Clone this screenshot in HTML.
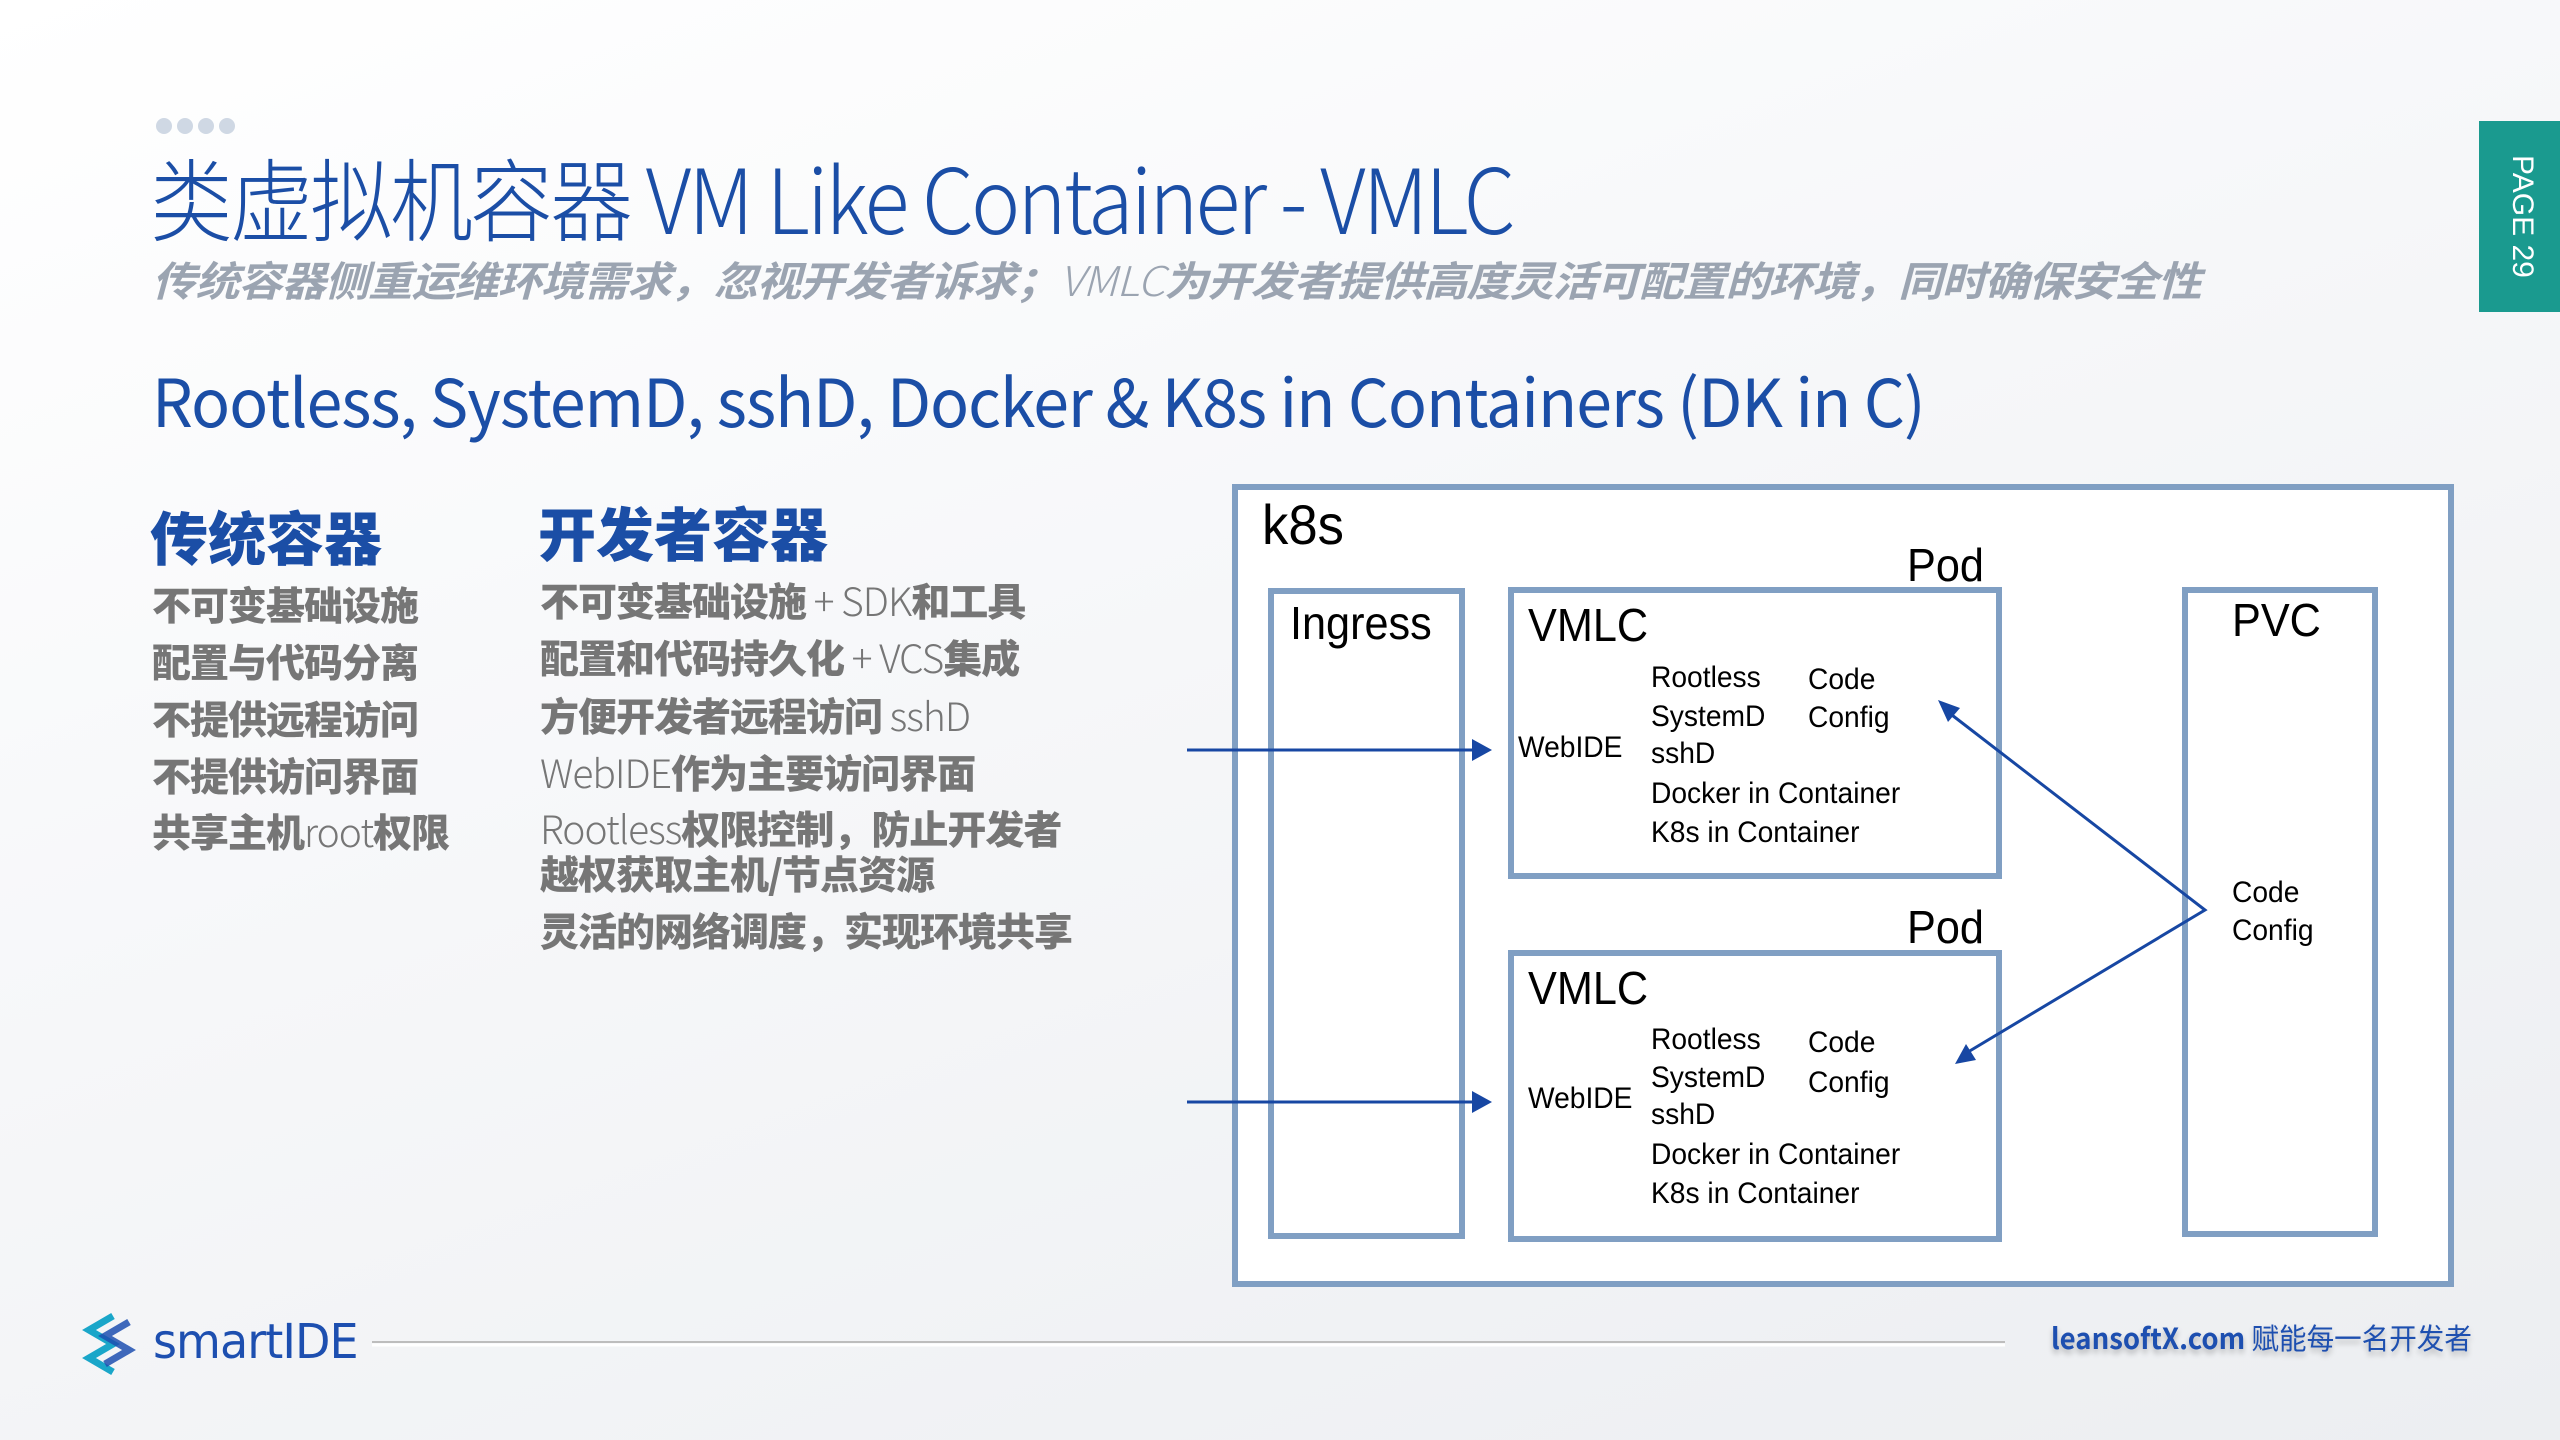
<!DOCTYPE html>
<html><head><meta charset="utf-8"><style>
*{margin:0;padding:0;box-sizing:border-box}
body{width:2560px;height:1440px;overflow:hidden;position:relative;background:linear-gradient(160deg,#ffffff 0%,#f6f7f9 45%,#eceef1 100%);font-family:"Liberation Sans","Noto Sans CJK SC",sans-serif}
.a{position:absolute;white-space:nowrap;line-height:1;transform-origin:0 0}
.cj{font-family:"Noto Sans CJK SC","Liberation Sans",sans-serif}
.t{color:#1b4ea6;font-weight:300;font-size:90px;letter-spacing:-3px}
.sub{color:#9ba4b1;font-size:41px;font-weight:700;font-style:italic;letter-spacing:-1px}
.lt{font-weight:300}
.g{color:#767676;font-size:39px;font-weight:900;letter-spacing:-1px}
.h{color:#1b4ea6;font-size:58px;font-weight:900}
.box{position:absolute;border:6px solid #809fc3;background:#fff}
.d{position:absolute;white-space:nowrap;line-height:1;font-family:"Liberation Sans Narrow","Liberation Sans",sans-serif;color:#000;transform-origin:0 0;transform:scaleX(.94)}
.s{font-size:30px}
</style></head><body>
<div class="a" style="left:156px;top:118px;font-size:0">
<span style="display:inline-block;width:16px;height:16px;border-radius:50%;background:#cfd8e4;margin-right:5px"></span><span style="display:inline-block;width:16px;height:16px;border-radius:50%;background:#cfd8e4;margin-right:5px"></span><span style="display:inline-block;width:16px;height:16px;border-radius:50%;background:#cfd8e4;margin-right:5px"></span><span style="display:inline-block;width:16px;height:16px;border-radius:50%;background:#cfd8e4"></span></div>
<div class="a cj t" style="left:150px;top:150px;transform:scaleX(.92)">类虚拟机容器 VM Like Container - VMLC</div>
<div class="a cj sub" style="left:152px;top:258px;transform:scaleX(1.08)">传统容器侧重运维环境需求，忽视开发者诉求；<span class="lt">VMLC</span>为开发者提供高度灵活可配置的环境，同时确保安全性</div>
<div class="a cj" style="left:152px;top:366px;font-size:66px;color:#1b4ea6;font-weight:400;letter-spacing:-1px;transform:scaleX(.975)">Rootless, SystemD, sshD, Docker &amp; K8s in Containers (DK in C)</div>

<div class="a cj h" style="left:150px;top:506px">传统容器</div>
<div class="a cj g" style="left:152px;top:585px">不可变基础设施</div>
<div class="a cj g" style="left:152px;top:642px">配置与代码分离</div>
<div class="a cj g" style="left:152px;top:699px">不提供远程访问</div>
<div class="a cj g" style="left:152px;top:756px">不提供访问界面</div>
<div class="a cj g" style="left:152px;top:812px">共享主机<span class="lt">root</span>权限</div>

<div class="a cj h" style="left:538px;top:502px">开发者容器</div>
<div class="a cj g" style="left:540px;top:581px">不可变基础设施<span class="lt"> + SDK</span>和工具</div>
<div class="a cj g" style="left:540px;top:638px">配置和代码持久化<span class="lt"> + VCS</span>集成</div>
<div class="a cj g" style="left:540px;top:696px">方便开发者远程访问<span class="lt"> sshD</span></div>
<div class="a cj g" style="left:540px;top:753px"><span class="lt">WebIDE</span>作为主要访问界面</div>
<div class="a cj g" style="left:540px;top:809px"><span class="lt">Rootless</span>权限控制，防止开发者</div>
<div class="a cj g" style="left:540px;top:854px">越权获取主机/节点资源</div>
<div class="a cj g" style="left:540px;top:911px">灵活的网络调度，实现环境共享</div>

<div class="box" style="left:1232px;top:484px;width:1222px;height:803px"></div>
<div class="d" style="left:1262px;top:497px;font-size:56px">k8s</div>
<div class="box" style="left:1268px;top:588px;width:197px;height:651px"></div>
<div class="d" style="left:1290px;top:600px;font-size:46px">Ingress</div>
<div class="box" style="left:1508px;top:587px;width:494px;height:292px"></div>
<div class="box" style="left:1508px;top:950px;width:494px;height:292px"></div>
<div class="box" style="left:2182px;top:587px;width:196px;height:650px"></div>
<div class="d" style="left:1907px;top:542px;font-size:46px">Pod</div>
<div class="d" style="left:1907px;top:904px;font-size:46px">Pod</div>
<div class="d" style="left:2232px;top:597px;font-size:46px">PVC</div>
<div class="d" style="left:1528px;top:602px;font-size:46px">VMLC</div>
<div class="d s" style="left:1651px;top:663px">Rootless</div>
<div class="d s" style="left:1651px;top:702px">SystemD</div>
<div class="d s" style="left:1651px;top:739px">sshD</div>
<div class="d s" style="left:1651px;top:779px">Docker in Container</div>
<div class="d s" style="left:1651px;top:818px">K8s in Container</div>
<div class="d s" style="left:1808px;top:665px">Code</div>
<div class="d s" style="left:1808px;top:703px">Config</div>
<div class="d s" style="left:1518px;top:733px">WebIDE</div>
<div class="d" style="left:1528px;top:965px;font-size:46px">VMLC</div>
<div class="d s" style="left:1651px;top:1025px">Rootless</div>
<div class="d s" style="left:1651px;top:1063px">SystemD</div>
<div class="d s" style="left:1651px;top:1100px">sshD</div>
<div class="d s" style="left:1651px;top:1140px">Docker in Container</div>
<div class="d s" style="left:1651px;top:1179px">K8s in Container</div>
<div class="d s" style="left:1808px;top:1028px">Code</div>
<div class="d s" style="left:1808px;top:1068px">Config</div>
<div class="d s" style="left:1528px;top:1084px">WebIDE</div>
<div class="d s" style="left:2232px;top:878px">Code</div>
<div class="d s" style="left:2232px;top:916px">Config</div>

<svg class="a" style="left:0;top:0" width="2560" height="1440">
<g stroke="#1747a3" stroke-width="3" fill="#1747a3">
<line x1="1187" y1="750" x2="1475" y2="750"/><polygon points="1492,750 1472,739 1472,761" stroke="none"/>
<line x1="1187" y1="1102" x2="1475" y2="1102"/><polygon points="1492,1102 1472,1091 1472,1113" stroke="none"/>
<polyline fill="none" points="1948,712 2205,910 1968,1052"/>
<polygon points="1938,700 1960,708 1948,722" stroke="none"/>
<polygon points="1955,1064 1966,1044 1976,1060" stroke="none"/>
</g>
<line x1="372" y1="1342" x2="2005" y2="1342" stroke="#bdbdbd" stroke-width="2"/>
<line x1="372" y1="1345" x2="2005" y2="1345" stroke="#fff" stroke-width="3"/>
<g transform="translate(85,1316)">
<path d="M28 0 L4 14 L28 28 L4 42 L28 56" fill="none" stroke="#1aa6c9" stroke-width="7"/>
<path d="M44 6 L20 20 L44 34 L20 48" fill="none" stroke="#1d4fb0" stroke-width="7" opacity=".85"/>
</g>
</svg>
<div class="a" style="left:153px;top:1318px;font-size:48px;color:#1d4fb0;font-family:'DejaVu Sans','Liberation Sans',sans-serif;font-weight:400;letter-spacing:-1px;transform:scaleX(.96)">smartIDE</div>
<div class="a cj" style="left:2051px;top:1323px;font-size:29px;color:#1d4fb0;font-weight:700;text-shadow:0 4px 6px rgba(0,0,0,.25);transform:scaleX(.95)">leansoftX.com <span style="font-weight:400">赋能每一名开发者</span></div>
<div class="a" style="left:2479px;top:121px;width:81px;height:191px;background:#1a9a8f"></div>
<div class="a" style="top:155px;color:#fff;font-size:30px;transform:rotate(90deg);transform-origin:0 0;left:2537px">PAGE 29</div>
</body></html>
